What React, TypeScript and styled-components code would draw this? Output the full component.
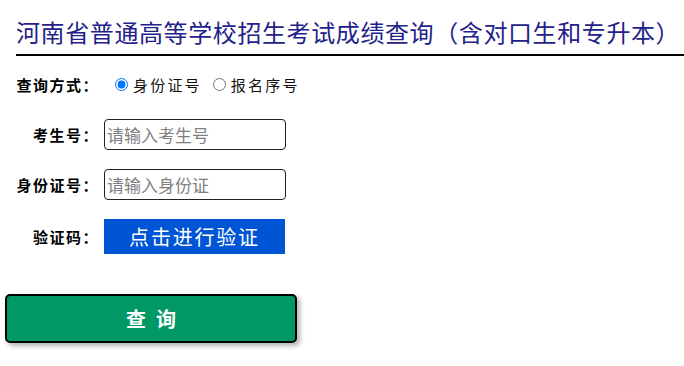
import React from "react";
import styled, { createGlobalStyle } from "styled-components";

const Global = createGlobalStyle`
  html, body { margin: 0; padding: 0; background: #fff; }
  body { font-family: "Noto Sans CJK SC", "Noto Sans", sans-serif; color: #000; }
`;

const Page = styled.div`
  width: 684px;
  height: 366px;
  overflow: hidden;
  padding-top: 15px;
  box-sizing: border-box;
`;

const TitleBar = styled.div`
  margin-left: 16px;
  border-bottom: 2px solid #000;
  padding-bottom: 5px;
`;

const Title = styled.h1`
  margin: 0;
  font-size: 24px;
  line-height: 34px;
  font-weight: normal;
  letter-spacing: 0.6px;
  color: #22228a;
  white-space: nowrap;
`;

const Form = styled.div`
  display: grid;
  grid-template-columns: 80px auto;
  column-gap: 8px;
  align-items: center;
  padding-left: 16px;
  margin-top: 13px;
`;

const Label = styled.div<{ $h: number }>`
  height: ${(p) => p.$h}px;
  display: flex;
  align-items: center;
  justify-content: flex-end;
  font-size: 15px;
  font-weight: bold;
  letter-spacing: 1.5px;
  white-space: nowrap;
  margin-right: -3px;
`;

const Cell = styled.div<{ $h: number }>`
  height: ${(p) => p.$h}px;
  display: flex;
  align-items: center;
`;

const Spacer = styled.div<{ $h: number }>`
  grid-column: 1 / span 2;
  height: ${(p) => p.$h}px;
`;

const RadioLabel = styled.label<{ $first?: boolean }>`
  display: inline-flex;
  align-items: center;
  font-size: 15px;
  letter-spacing: 2.2px;
  color: #111;
  white-space: nowrap;
  input {
    margin: 0 5px 0 ${(p) => (p.$first ? 11 : 11)}px;
    width: 13px;
    height: 13px;
  }
`;

const TextInput = styled.input`
  box-sizing: border-box;
  width: 182px;
  height: 31px;
  border: 1px solid #222;
  border-radius: 4px;
  padding: 0 2px;
  font-family: inherit;
  font-size: 17px;
  outline: none;
  &::placeholder { color: #808080; }
`;

const VerifyButton = styled.button`
  box-sizing: border-box;
  width: 181px;
  height: 35px;
  border: none;
  background: #0055d5;
  color: #fff;
  font-family: inherit;
  font-size: 20px;
  letter-spacing: 1.8px;
  padding: 0;
  cursor: pointer;
`;

const QueryButton = styled.button`
  display: block;
  box-sizing: border-box;
  margin: 40px 0 0 5px;
  width: 292px;
  height: 49px;
  border: 2px solid #000;
  border-radius: 5px;
  background: #009966;
  color: #fff;
  font-family: inherit;
  font-size: 20px;
  font-weight: bold;
  letter-spacing: 10px;
  padding: 0 0 0 10px;
  box-shadow: 3px 3px 5px rgba(0, 0, 0, 0.3);
  cursor: pointer;
`;

export default function App() {
  return (
    <Page>
      <Global />
      <TitleBar>
        <Title>河南省普通高等学校招生考试成绩查询（含对口生和专升本）</Title>
      </TitleBar>
      <Form>
        <Label $h={30}>查询方式：</Label>
        <Cell $h={30}>
          <RadioLabel $first>
            <input type="radio" name="mode" defaultChecked />
            身份证号
          </RadioLabel>
          <RadioLabel>
            <input type="radio" name="mode" />
            报名序号
          </RadioLabel>
        </Cell>
        <Spacer $h={20} />
        <Label $h={31}>考生号：</Label>
        <Cell $h={31}>
          <TextInput placeholder="请输入考生号" />
        </Cell>
        <Spacer $h={19} />
        <Label $h={31}>身份证号：</Label>
        <Cell $h={31}>
          <TextInput placeholder="请输入身份证" />
        </Cell>
        <Spacer $h={19} />
        <Label $h={35}>验证码：</Label>
        <Cell $h={35}>
          <VerifyButton>点击进行验证</VerifyButton>
        </Cell>
      </Form>
      <QueryButton>查询</QueryButton>
    </Page>
  );
}
